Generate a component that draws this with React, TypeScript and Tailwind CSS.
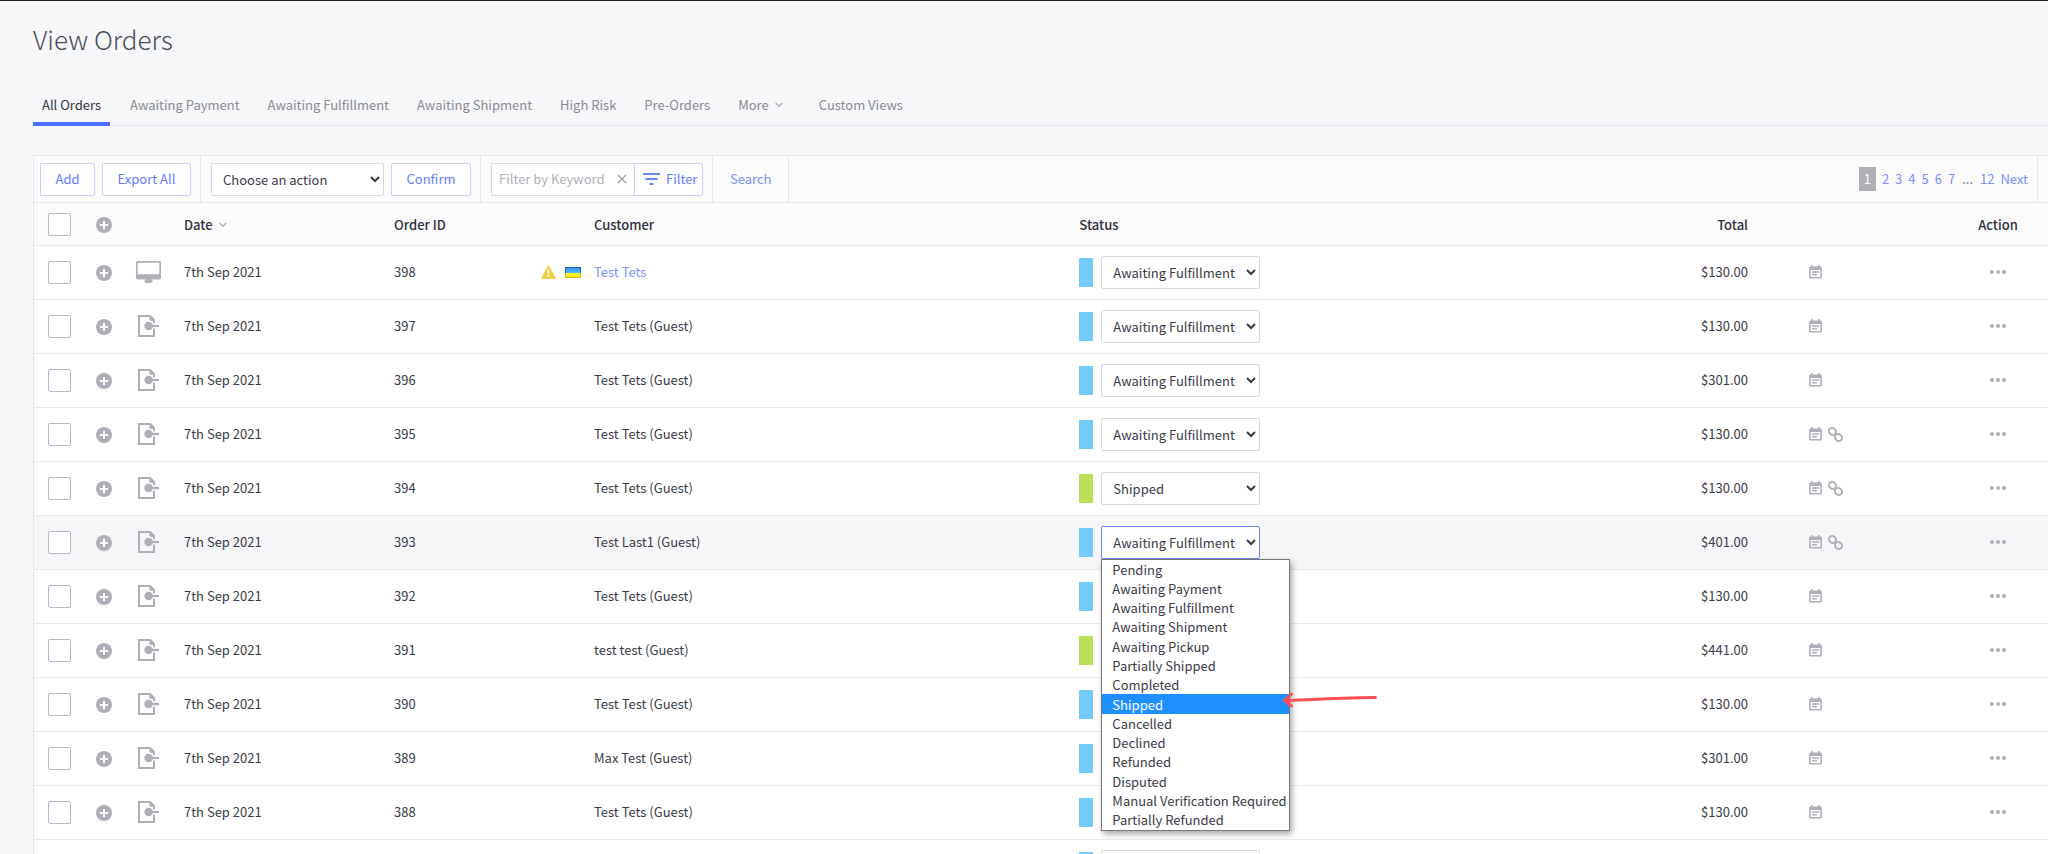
import React from "react";

const STATUSES = [
  "Pending",
  "Awaiting Payment",
  "Awaiting Fulfillment",
  "Awaiting Shipment",
  "Awaiting Pickup",
  "Partially Shipped",
  "Completed",
  "Shipped",
  "Cancelled",
  "Declined",
  "Refunded",
  "Disputed",
  "Manual Verification Required",
  "Partially Refunded",
];

type Order = {
  id: number;
  customer: string;
  status: string;
  total: string;
  registered?: boolean;
  linked?: boolean;
  open?: boolean;
};

const AF = "Awaiting Fulfillment";

const ORDERS: Order[] = [
  { id: 398, customer: "Test Tets", status: AF, total: "$130.00", registered: true },
  { id: 397, customer: "Test Tets (Guest)", status: AF, total: "$130.00" },
  { id: 396, customer: "Test Tets (Guest)", status: AF, total: "$301.00" },
  { id: 395, customer: "Test Tets (Guest)", status: AF, total: "$130.00", linked: true },
  { id: 394, customer: "Test Tets (Guest)", status: "Shipped", total: "$130.00", linked: true },
  { id: 393, customer: "Test Last1 (Guest)", status: AF, total: "$401.00", linked: true, open: true },
  { id: 392, customer: "Test Tets (Guest)", status: AF, total: "$130.00" },
  { id: 391, customer: "test test (Guest)", status: "Shipped", total: "$441.00" },
  { id: 390, customer: "Test Test (Guest)", status: AF, total: "$130.00" },
  { id: 389, customer: "Max Test (Guest)", status: AF, total: "$301.00" },
  { id: 388, customer: "Test Tets (Guest)", status: AF, total: "$130.00" },
  { id: 387, customer: "Test Tets (Guest)", status: AF, total: "$130.00" },
];

const TABS = ["Awaiting Payment", "Awaiting Fulfillment", "Awaiting Shipment", "High Risk", "Pre-Orders"];

function Chevron() {
  return (
    <svg width="8" height="6" viewBox="0 0 8 6" fill="none" stroke="#b0afb7" strokeWidth="1.5" aria-hidden="true">
      <path d="M0.7 1l3.3 3.3L7.3 1" />
    </svg>
  );
}

function PlusIcon() {
  return (
    <svg width="16" height="16" viewBox="0 0 16 16" aria-hidden="true">
      <circle cx="8" cy="8" r="8" fill="#b0afb7" />
      <path d="M8 4v8M4 8h8" stroke="#fff" strokeWidth="2" />
    </svg>
  );
}

function MonitorIcon() {
  return (
    <svg width="25" height="22" viewBox="0 0 25 22" fill="#b0afb7" aria-label="Desktop order" role="img">
      <path
        fillRule="evenodd"
        d="M1.6 0h21.8C24.3 0 25 .7 25 1.6v15.2c0 .9-.7 1.6-1.6 1.6H1.6C.7 18.4 0 17.7 0 16.8V1.6C0 .7.7 0 1.6 0zm.1 1.7v11.5h21.6V1.7z"
      />
      <path d="M9.500 18h6v1.500h1.200v1.500h-1.200v1h-6v-1H8.300v-1.500h1.200z" />
    </svg>
  );
}

function ImportIcon() {
  return (
    <svg width="21" height="22" viewBox="0 0 21 22" fill="none" stroke="#b0afb7" strokeWidth="2" aria-label="Imported order" role="img">
      <path d="M16 8.200V4.800L12.200 1H1v20h15v-7.500" />
      <path d="M11.400 0.600h1.200l4.200 4.200v1.200h-4l-1.400-1.400z" fill="#b0afb7" stroke="none" />
      <circle cx="10.600" cy="11" r="4.300" fill="#b0afb7" stroke="none" />
      <path d="M10 11h11" strokeWidth="2.200" />
    </svg>
  );
}

function NoteIcon() {
  return (
    <svg width="13" height="14" viewBox="0 0 13 14" fill="#b0afb7" aria-label="Order notes" role="img">
      <path
        fillRule="evenodd"
        d="M2.200 0h1.600v1.400h5.400V0h1.600v1.400h.7c.8 0 1.400.6 1.400 1.400v9.400c0 .8-.6 1.400-1.400 1.400h-10C.7 13.600.100 13 .100 12.200V2.800c0-.8.6-1.400 1.400-1.400h.7zM1.700 4.900v7.100h9.600V4.900z"
      />
      <path d="M3 6.300h7v1.500H3zM3 9.100h5v1.500H3z" />
    </svg>
  );
}

function LinkIcon() {
  return (
    <svg width="15" height="15" viewBox="0 0 15 15" fill="none" stroke="#b0afb7" strokeWidth="2" aria-label="Linked" role="img">
      <rect x="0.8" y="1.300" width="7.400" height="6.400" rx="3.200" transform="rotate(45 4.500 4.500)" />
      <rect x="6.800" y="7.300" width="7.400" height="6.400" rx="3.200" transform="rotate(45 10.500 10.500)" />
    </svg>
  );
}

function WarningIcon() {
  return (
    <svg width="15" height="14" viewBox="0 0 15 14" aria-label="Warning" role="img">
      <path d="M7.500 0.600L14.600 13.400H0.400z" fill="#f2cc3f" stroke="#f2cc3f" strokeWidth="0.8" strokeLinejoin="round" />
      <path d="M7.500 4.800v4" stroke="#fff" strokeWidth="1.800" />
      <path d="M7.500 10v1.800" stroke="#fff" strokeWidth="1.800" />
    </svg>
  );
}

function FlagIcon() {
  return (
    <svg width="16" height="11" viewBox="0 0 16 11" aria-label="Ukraine" role="img">
      <defs>
        <linearGradient id="flag-blue" x1="0" y1="0" x2="0" y2="1">
          <stop offset="0" stopColor="#2f8de8" />
          <stop offset="1" stopColor="#5db8f7" />
        </linearGradient>
      </defs>
      <rect width="16" height="6" fill="url(#flag-blue)" />
      <rect y="6" width="16" height="5" fill="#fbf01d" />
      <path d="M.5 0v6M15.5 0v6M0 .5h16" stroke="#1d68bd" fill="none" />
      <path d="M.5 6v4.5h15V6" stroke="#d8b90f" fill="none" />
    </svg>
  );
}

function StatusPopup() {
  return (
    <>
      <ul
        role="listbox"
        aria-label="Order status"
        className="absolute left-0 top-full z-10 flex h-[272px] w-[189px] flex-col border border-[#767676] bg-white shadow-[2px_3px_6px_rgba(0,0,0,0.35)]"
      >
        {STATUSES.map((s) => (
          <li
            key={s}
            role="option"
            aria-selected={s === "Shipped"}
            className={
              s === "Shipped"
                ? "flex flex-1 items-center whitespace-nowrap bg-[#1e90ff] pl-2.5 leading-[19px] text-white"
                : "flex flex-1 items-center whitespace-nowrap pl-2.5 leading-[19px]"
            }
          >
            {s}
          </li>
        ))}
      </ul>
      <svg
        className="absolute left-[180px] top-[164px] z-20"
        width="100"
        height="20"
        viewBox="0 0 100 20"
        fill="none"
        stroke="#fb4e55"
        strokeWidth="3"
        strokeLinecap="round"
        strokeLinejoin="round"
        aria-hidden="true"
      >
        <path d="M3.500 10.500C30 10 60 7.500 94.500 7.500" />
        <path d="M10.500 4L3.500 10.500L10.500 16" />
      </svg>
    </>
  );
}

function Row({ order }: { order: Order }) {
  return (
    <tr className={order.open ? "h-[54px] border-b border-[#e9e9ee] bg-[#f6f6f9]" : "h-[54px] border-b border-[#e9e9ee] bg-white"}>
      <td className="pl-3.5">
        <input
          type="checkbox"
          aria-label={`Select order ${order.id}`}
          className="block size-[23px] appearance-none rounded-xs border border-[#b4b8c6] bg-white"
        />
      </td>
      <td>
        <button aria-label={`Expand order ${order.id}`} className="block pl-1.5 pt-0.5">
          <PlusIcon />
        </button>
      </td>
      <td>
        <div className={order.registered ? "pl-1" : "pl-1.5"}>{order.registered ? <MonitorIcon /> : <ImportIcon />}</div>
      </td>
      <td>7th Sep 2021</td>
      <td>{order.id}</td>
      <td>
        {order.registered && (
          <div className="flex items-center gap-[9px]">
            <WarningIcon />
            <FlagIcon />
          </div>
        )}
      </td>
      <td>
        {order.registered ? (
          <a href="#customer" className="text-[#7b90fb]">
            {order.customer}
          </a>
        ) : (
          order.customer
        )}
      </td>
      <td className="pl-0.5">
        <div className="flex items-center gap-2">
          <span className={order.status === "Shipped" ? "h-[29px] w-3.5 bg-[#bcdf58]" : "h-[29px] w-3.5 bg-[#73cbfc]"} />
          <div className="relative">
            <select
              aria-label={`Status of order ${order.id}`}
              defaultValue={order.status}
              className={
                order.open
                  ? "block h-[33px] w-[159px] rounded-xs border border-[#6a85f8] bg-white pl-[7px]"
                  : "block h-[33px] w-[159px] rounded-xs border border-[#d9dade] bg-white pl-[7px]"
              }
            >
              {STATUSES.map((s) => (
                <option key={s}>{s}</option>
              ))}
            </select>
            {order.open && <StatusPopup />}
          </div>
        </div>
      </td>
      <td className="text-right">{order.total}</td>
      <td>
        <div className="flex items-center gap-1.5 pl-[61px]">
          <NoteIcon />
          {order.linked && <LinkIcon />}
        </div>
      </td>
      <td>
        <button aria-label={`Actions for order ${order.id}`} className="mx-auto block">
          <svg width="16" height="4" viewBox="0 0 16 4" fill="#b0afb7" aria-hidden="true">
            <circle cx="2" cy="2" r="2" />
            <circle cx="8" cy="2" r="2" />
            <circle cx="14" cy="2" r="2" />
          </svg>
        </button>
      </td>
    </tr>
  );
}

const BUTTON = "h-[33px] rounded-xs border border-[#c5d0fd] bg-white text-[#5f7dfb]";
const SECTION = "flex items-center border-r border-[#e4e6ef]";

export default function App() {
  return (
    <div className="h-screen overflow-hidden border-t border-[#202024] bg-[#f6f7f9] pl-[33px] font-['Noto_Sans_CJK_SC','Open_Sans',sans-serif] text-[13px] leading-5 text-[#3a3b47]">
      <h1 className="pt-[18px] text-[26px] font-light leading-10 text-[#4c4d5a]">View Orders</h1>

      <nav aria-label="Order views" className="mt-[26px] flex h-[41px] border-b border-[#e4e6ee] text-[#8b8a92]">
        <a
          href="#orders"
          aria-current="page"
          className="mr-2.5 h-[41px] border-b-4 border-[#4b71fc] px-[9px] pt-2.5 text-[#34353f]"
        >
          All Orders
        </a>
        {TABS.map((t) => (
          <a key={t} href="#orders" className="pl-2.5 pr-[18px] pt-2.5">
            {t}
          </a>
        ))}
        <a href="#more" className="flex h-10 items-center gap-1.5 pl-2.5">
          More <Chevron />
        </a>
        <a href="#custom" className="pl-9 pt-2.5">
          Custom Views
        </a>
      </nav>

      <main className="mt-[29px] border-l border-t border-[#e4e6ee] bg-[#fbfbfb]">
        <div className="flex h-[47px] border-b border-[#e4e6ef]">
          <div className={`${SECTION} gap-[7px] pl-1.5 pr-[9px]`}>
            <button className={`${BUTTON} w-[55px]`}>Add</button>
            <button className={`${BUTTON} w-[89px]`}>Export All</button>
          </div>
          <div className={`${SECTION} gap-[7px] pl-2.5 pr-[9px]`}>
            <select aria-label="Bulk action" className="h-[33px] w-[173px] rounded-xs border border-[#d9dade] bg-white pl-[7px]">
              <option>Choose an action</option>
            </select>
            <button className={`${BUTTON} w-[80px]`}>Confirm</button>
          </div>
          <div className={`${SECTION} pl-2.5 pr-[9px]`}>
            <div className="flex h-[33px] w-[143px] items-center rounded-l-xs border border-r-0 border-[#d9dade] bg-white pl-[7px]">
              <input
                type="text"
                aria-label="Filter by Keyword"
                placeholder="Filter by Keyword"
                className="w-[118px] min-w-0 bg-transparent outline-none placeholder:text-[#b0afb7]"
              />
              <button aria-label="Clear filter">
                <svg width="10" height="10" viewBox="0 0 10 10" stroke="#a09fa8" strokeWidth="1.4" aria-hidden="true">
                  <path d="M1 1l8 8M9 1l-8 8" />
                </svg>
              </button>
            </div>
            <button className="flex h-[33px] w-[69px] items-center gap-1.5 rounded-r-xs border border-[#c5d0fd] bg-white pl-2 text-[#5f7dfb]">
              <svg width="17" height="12" viewBox="0 0 17 12" fill="#6b88fb" aria-hidden="true">
                <path d="M0 0h17v2H0zM2.500 5h12v2h-12zM6.500 10h4v2h-4z" />
              </svg>
              Filter
            </button>
          </div>
          <div className={`${SECTION} px-[17px]`}>
            <a href="#search" className="text-[#7b90fb]">
              Search
            </a>
          </div>
          <nav aria-label="Pages" className={`${SECTION} ml-auto mr-2.5 gap-[6px] pr-[9px] text-[#7b90fb]`}>
            <span className="flex h-6 w-[17px] items-center justify-center bg-[#b0afb7] text-white" aria-current="page">
              1
            </span>
            {["2", "3", "4", "5", "6", "7"].map((p) => (
              <a key={p} href="#page">
                {p}
              </a>
            ))}
            <span className="px-px text-[#77767e]">...</span>
            <a href="#page">12</a>
            <a href="#page">Next</a>
          </nav>
        </div>

        <table className="w-full table-fixed border-collapse">
          <colgroup>
            <col className="w-[56px]" />
            <col className="w-[42px]" />
            <col className="w-[52px]" />
            <col className="w-[210px]" />
            <col className="w-[147px]" />
            <col className="w-[53px]" />
            <col className="w-[24%]" />
            <col />
            <col className="w-[120px]" />
            <col className="w-[200px]" />
            <col className="w-[100px]" />
          </colgroup>
          <thead>
            <tr className="h-[42px] border-b border-[#e9e9ee] text-left text-[#2f303b] [&>th]:pt-0.5 [&>th]:font-medium">
              <th className="pl-3.5">
                <input
                  type="checkbox"
                  aria-label="Select all orders"
                  className="block size-[23px] appearance-none rounded-xs border border-[#b4b8c6] bg-white"
                />
              </th>
              <th>
                <button aria-label="Expand all orders" className="block pl-1.5">
                  <PlusIcon />
                </button>
              </th>
              <th />
              <th>
                <span className="flex items-center gap-1.5">
                  Date <Chevron />
                </span>
              </th>
              <th>Order ID</th>
              <th />
              <th>Customer</th>
              <th className="pl-0.5">Status</th>
              <th>
                <span className="block text-right">Total</span>
              </th>
              <th />
              <th>
                <span className="block text-center">Action</span>
              </th>
            </tr>
          </thead>
          <tbody>
            {ORDERS.map((o) => (
              <Row key={o.id} order={o} />
            ))}
          </tbody>
        </table>
      </main>
    </div>
  );
}
